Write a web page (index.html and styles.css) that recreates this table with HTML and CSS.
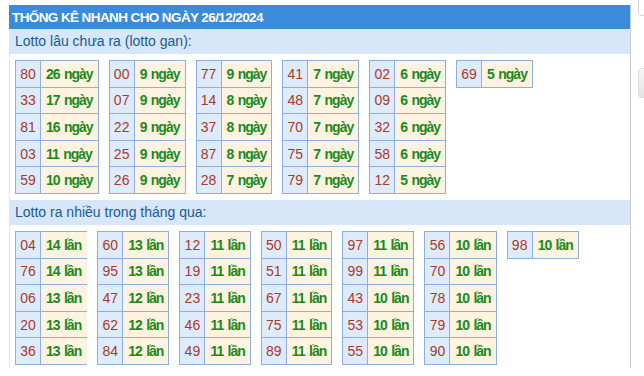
FILE: index.html
```html
<!DOCTYPE html>
<html lang="vi">
<head>
<meta charset="utf-8">
<title>Thống kê nhanh</title>
<link rel="stylesheet" href="styles.css">
</head>
<body>
<div class="page">
  <div class="panel">
    <div class="head">THỐNG KÊ NHANH CHO NGÀY 26/12/2024</div>
    <div class="sub">Lotto lâu chưa ra (lotto gan):</div>
    <div class="group">
      <table class="t"><tr><td class="n">80</td><td class="d">26 ngày</td></tr><tr><td class="n">33</td><td class="d">17 ngày</td></tr><tr><td class="n">81</td><td class="d">16 ngày</td></tr><tr><td class="n">03</td><td class="d">11 ngày</td></tr><tr><td class="n">59</td><td class="d">10 ngày</td></tr></table>
      <table class="t"><tr><td class="n">00</td><td class="d">9 ngày</td></tr><tr><td class="n">07</td><td class="d">9 ngày</td></tr><tr><td class="n">22</td><td class="d">9 ngày</td></tr><tr><td class="n">25</td><td class="d">9 ngày</td></tr><tr><td class="n">26</td><td class="d">9 ngày</td></tr></table>
      <table class="t"><tr><td class="n">77</td><td class="d">9 ngày</td></tr><tr><td class="n">14</td><td class="d">8 ngày</td></tr><tr><td class="n">37</td><td class="d">8 ngày</td></tr><tr><td class="n">87</td><td class="d">8 ngày</td></tr><tr><td class="n">28</td><td class="d">7 ngày</td></tr></table>
      <table class="t"><tr><td class="n">41</td><td class="d">7 ngày</td></tr><tr><td class="n">48</td><td class="d">7 ngày</td></tr><tr><td class="n">70</td><td class="d">7 ngày</td></tr><tr><td class="n">75</td><td class="d">7 ngày</td></tr><tr><td class="n">79</td><td class="d">7 ngày</td></tr></table>
      <table class="t"><tr><td class="n">02</td><td class="d">6 ngày</td></tr><tr><td class="n">09</td><td class="d">6 ngày</td></tr><tr><td class="n">32</td><td class="d">6 ngày</td></tr><tr><td class="n">58</td><td class="d">6 ngày</td></tr><tr><td class="n">12</td><td class="d">5 ngày</td></tr></table>
      <table class="t"><tr><td class="n">69</td><td class="d">5 ngày</td></tr></table>
    </div>
    <div class="sub sub2">Lotto ra nhiều trong tháng qua:</div>
    <div class="group">
      <table class="t t2 open"><tr><td class="n">04</td><td class="d">14 lần</td></tr><tr><td class="n">76</td><td class="d">14 lần</td></tr><tr><td class="n">06</td><td class="d">13 lần</td></tr><tr><td class="n">20</td><td class="d">13 lần</td></tr><tr><td class="n">36</td><td class="d">13 lần</td></tr></table>
      <table class="t t2"><tr><td class="n">60</td><td class="d">13 lần</td></tr><tr><td class="n">95</td><td class="d">13 lần</td></tr><tr><td class="n">47</td><td class="d">12 lần</td></tr><tr><td class="n">62</td><td class="d">12 lần</td></tr><tr><td class="n">84</td><td class="d">12 lần</td></tr></table>
      <table class="t t2"><tr><td class="n">12</td><td class="d">11 lần</td></tr><tr><td class="n">19</td><td class="d">11 lần</td></tr><tr><td class="n">23</td><td class="d">11 lần</td></tr><tr><td class="n">46</td><td class="d">11 lần</td></tr><tr><td class="n">49</td><td class="d">11 lần</td></tr></table>
      <table class="t t2"><tr><td class="n">50</td><td class="d">11 lần</td></tr><tr><td class="n">51</td><td class="d">11 lần</td></tr><tr><td class="n">67</td><td class="d">11 lần</td></tr><tr><td class="n">75</td><td class="d">11 lần</td></tr><tr><td class="n">89</td><td class="d">11 lần</td></tr></table>
      <table class="t t2"><tr><td class="n">97</td><td class="d">11 lần</td></tr><tr><td class="n">99</td><td class="d">11 lần</td></tr><tr><td class="n">43</td><td class="d">10 lần</td></tr><tr><td class="n">53</td><td class="d">10 lần</td></tr><tr><td class="n">55</td><td class="d">10 lần</td></tr></table>
      <table class="t t2"><tr><td class="n">56</td><td class="d">10 lần</td></tr><tr><td class="n">70</td><td class="d">10 lần</td></tr><tr><td class="n">78</td><td class="d">10 lần</td></tr><tr><td class="n">79</td><td class="d">10 lần</td></tr><tr><td class="n">90</td><td class="d">10 lần</td></tr></table>
      <table class="t t2"><tr><td class="n">98</td><td class="d">10 lần</td></tr></table>
    </div>
  </div>
  <div class="side">
    <div class="box box1"></div>
    <div class="box box2"></div>
  </div>
</div>
</body>
</html>
```

FILE: styles.css
```css
html, body {
  margin: 0;
  padding: 0;
  background: #fff;
}
body {
  font-family: "Liberation Sans", Arial, sans-serif;
  overflow: hidden;
}
.page {
  display: flex;
  align-items: flex-start;
  width: 644px;
  height: 376px;
  overflow: hidden;
}
.panel {
  flex-shrink: 0;
  margin-left: 9px;
  margin-top: 5px;
  width: 620px;
  height: 363px;
  border-left: 1px solid #e3e6ec;
  border-right: 1px solid #c9cddb;
}
.head {
  height: 24px;
  line-height: 25px;
  background: #3b8bdb;
  color: #fff;
  font-weight: bold;
  font-size: 13.5px;
  letter-spacing: -0.6px;
  padding-left: 3px;
  margin-left: -1px;
  white-space: nowrap;
}
.sub {
  height: 25px;
  line-height: 25px;
  background: #d5e7f9;
  color: #1d5a93;
  font-size: 14px;
  padding-left: 5px;
}
.sub2 {
  margin-top: 6px;
}
.group {
  display: flex;
  align-items: flex-start;
  gap: 10px;
  padding: 6px 0 0 5px;
}
.t {
  border-collapse: collapse;
}
.t td {
  border: 1px solid #8eaedc;
  height: 25.6px;
  padding: 0;
  font-size: 14px;
  line-height: 16px;
  white-space: nowrap;
}
.t .n {
  width: 24px;
  text-align: center;
  background: #deebfa;
  color: #a93a2a;
}
.t .d {
  background: #fef3e1;
  color: #1b8a1b;
  font-weight: bold;
  letter-spacing: -1px;
  word-spacing: 1.5px;
  padding: 0 5px 0 5px;
}
.open tr td.d {
  border-right-color: transparent;
}
.side {
  flex-shrink: 0;
  margin-left: 7px;
  display: flex;
  flex-direction: column;
  gap: 52px;
  margin-top: -10px;
}
.box {
  width: 30px;
  border-radius: 4px;
}
.box1 {
  height: 24px;
  border: 1px solid #d6d6d6;
  background: #fff;
}
.box2 {
  height: 28px;
  border: 1px solid #dcdcdc;
  background: linear-gradient(#f6f6f6, #e4e4e4);
}
```
